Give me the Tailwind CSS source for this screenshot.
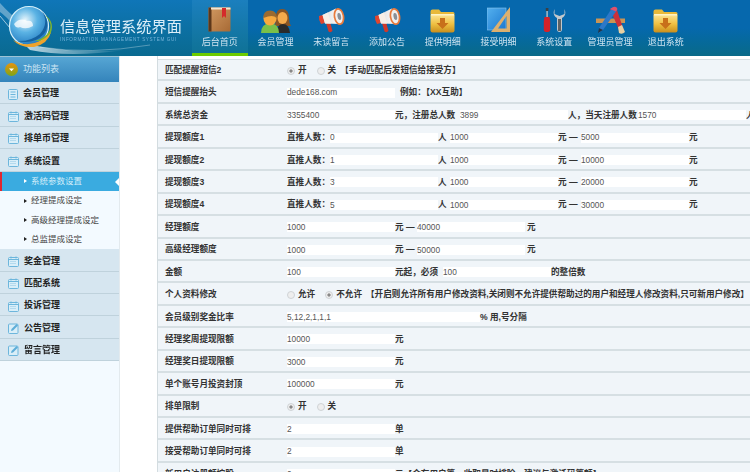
<!DOCTYPE html>
<html lang="en">
<head>
  <meta charset="UTF-8">
  <title>信息管理系统界面</title>
  <script src="https://cdn.jsdelivr.net/npm/@tailwindcss/browser@4"></script>
</head>
<body class="bg-white">
<div class="w-[750px] h-[472px] overflow-hidden flex flex-col font-['Liberation_Sans','Noto_Sans_CJK_SC',sans-serif] blur-[0.3px]">

  <!-- shared icon parts -->
  <svg class="absolute w-0 h-0">
    <defs>
      <linearGradient id="folderFill" x1="0" y1="0" x2="0" y2="1"><stop offset="0" stop-color="#fbe08a"/><stop offset="0.5" stop-color="#efc042"/><stop offset="1" stop-color="#c98e1c"/></linearGradient>
      <linearGradient id="hornFill" x1="0" y1="0" x2="1" y2="0"><stop offset="0" stop-color="#d9d9d9"/><stop offset="1" stop-color="#ffffff"/></linearGradient>
      <symbol id="folder" viewBox="0 0 25 25">
        <path d="M0.5 3.5 Q0.5 1.5 2.5 1.5 H9 L11 4 H23 Q24.5 4 24.5 5.5 V8 H0.5Z" fill="#e8b93a"/>
        <rect x="1" y="6" width="23" height="2" fill="#fff3c4"/>
        <path d="M0.5 7.5 H24.5 V22.5 Q24.5 24.5 22.5 24.5 H2.5 Q0.5 24.5 0.5 22.5Z" fill="url(#folderFill)"/>
        <path d="M10 10 H15 V15 H18.5 L12.5 21 L6.5 15 H10Z" fill="#c8701a"/>
      </symbol>
      <symbol id="horn" viewBox="0 0 27 26">
        <path d="M8 16 L12 15 L14.5 24 Q12.5 26 10.5 24.5Z" fill="#d0392b"/>
        <path d="M1 9 L5 8 L7 16 L3 17 Q0.5 13 1 9Z" fill="#e0452f"/>
        <path d="M4.5 8 L18 1.5 L22 17 L7 16.5Z" fill="url(#hornFill)"/>
        <path d="M4.5 8 L7 16.5 L13 16.4 L10 5.5Z" fill="#f7efe6"/>
        <ellipse cx="21" cy="9.5" rx="5.3" ry="8.7" fill="#e87a3c" transform="rotate(-10 21 9.5)"/>
        <ellipse cx="21" cy="9.5" rx="3.6" ry="6.8" fill="#f0f0f0" transform="rotate(-10 21 9.5)"/>
        <ellipse cx="21.3" cy="9.5" rx="1.8" ry="3.6" fill="#8a8f96" transform="rotate(-10 21 9.5)"/>
      </symbol>
      <symbol id="calendar" viewBox="0 0 11 11">
        <rect x="0.5" y="1.5" width="10" height="9" rx="1" fill="#d9eef8" stroke="#6db6dc"/>
        <path d="M0.5 3.5H10.5" stroke="#6db6dc"/>
        <path d="M3 0.5V2.5M8 0.5V2.5" stroke="#6db6dc"/>
        <path d="M2.5 5.5H8.5M2.5 7.5H8.5" stroke="#8cc5e3" stroke-dasharray="1 1"/>
      </symbol>
      <symbol id="note" viewBox="0 0 11 11">
        <rect x="0.5" y="1" width="9.5" height="9.5" rx="1" fill="#d9eef8" stroke="#6db6dc"/>
        <path d="M3 8 L3.5 6 L8.5 1 L10 2.5 L5 7.5Z" fill="#5eaed8"/>
      </symbol>
    </defs>
  </svg>

  <header class="h-[56px] shrink-0 flex bg-gradient-to-b from-[#0668ad] from-50% to-[#0a6a88]">
    <div class="relative w-[192px] shrink-0 overflow-hidden bg-gradient-to-b from-[#0f76b8] to-[#0a6a90]">
      <svg class="absolute inset-0" width="192" height="56" viewBox="0 0 192 56">
        <defs>
          <radialGradient id="globe" cx="0.4" cy="0.35" r="0.7"><stop offset="0" stop-color="#e8f6fc"/><stop offset="0.45" stop-color="#5bb3e4"/><stop offset="1" stop-color="#1d75bd"/></radialGradient>
          <linearGradient id="shine" x1="0" y1="0" x2="1" y2="0"><stop offset="0" stop-color="#ffffff" stop-opacity="0.75"/><stop offset="1" stop-color="#ffffff" stop-opacity="0"/></linearGradient>
        </defs>
        <path d="M0 3 Q8 12 20 22 L14 26 Q6 16 0 12Z" fill="#ffffff" opacity="0.35"/>
        <path d="M0 16 Q5 22 10 28" stroke="#ffffff" stroke-opacity="0.6" fill="none"/>
        <path d="M22 42 Q60 54 125 50 Q70 58 30 50Z" fill="url(#shine)"/>
        <path d="M40 47 Q90 55 150 45" stroke="#ffffff" stroke-opacity="0.3" fill="none"/>
        <circle cx="29" cy="26" r="19.5" fill="url(#globe)" stroke="#d6f0fa" stroke-width="1.2"/>
        <path d="M14 24 Q20 17 27 21 Q33 20 33 26 Q26 30 20 27 Q16 29 14 24Z" fill="#ffffff" opacity="0.75"/>
        <path d="M41 10 Q50 22 40 34 Q30 42 17 41 Q34 45 44 34 Q52 22 41 10Z" fill="#15619f"/>
        <path d="M45 15 Q56 27 45 36 Q40 40 35 41 Q51 42 52 27 Q52 20 45 15Z" fill="#7fb52e"/>
        <path d="M13 40 Q26 48 40 41 Q48 37 51 32 Q48 44 34 47 Q20 48 13 40Z" fill="#efa32b"/>
      </svg>
      <div class="absolute left-[60px] top-[18px] text-[15.25px] leading-[17px] text-[#dbeef8] whitespace-nowrap">信息管理系统界面</div>
      <div class="absolute left-[60px] top-[37px] text-[4.6px] leading-[6px] tracking-[0.65px] text-[#74b3d8] whitespace-nowrap">INFORMATION MANAGEMENT SYSTEM GUI</div>
    </div>

    <nav class="flex text-[9px] text-[#cfe4f0] [&>a]:w-[55.75px] [&>a]:h-[56px] [&>a]:shrink-0 [&>a]:relative [&>a]:flex [&>a]:justify-center [&>a>span]:absolute [&>a>span]:top-[36px] [&>a>span]:leading-[12px] [&>a>span]:whitespace-nowrap">
      <a class="border-b-[3px] border-[#6ccb00] bg-gradient-to-b from-[#1b7fbe] to-[#0f7296]">
        <svg class="mt-[7px]" width="23" height="25" viewBox="0 0 23 25">
          <defs><linearGradient id="cover" x1="0" y1="0" x2="1" y2="1"><stop offset="0" stop-color="#d29a62"/><stop offset="1" stop-color="#a76a35"/></linearGradient></defs>
          <rect x="0.5" y="0.5" width="22" height="24" rx="1" fill="url(#cover)"/>
          <rect x="0.5" y="0.5" width="3" height="24" fill="#5c371a"/>
          <rect x="3" y="0.5" width="19.5" height="2" fill="#f3e6d0"/>
          <path d="M14 1 H18 V11 L16 9 L14 11Z" fill="#d42a2a"/>
        </svg>
        <span>后台首页</span>
      </a>
      <a>
        <svg class="mt-[9px]" width="30" height="24" viewBox="0 0 30 24">
          <path d="M15 8 Q15 0 21 0 Q28 0 28 9 Q28 14 30 17 L14 17Z" fill="#8a5524"/>
          <path d="M16 24 Q16 15 22 15 Q28 15 29 24Z" fill="#2a2a2a"/>
          <ellipse cx="21.5" cy="9" rx="5" ry="6" fill="#f4aa4c"/>
          <path d="M0 24 Q0 15 9 14 Q18 15 18 24Z" fill="#7ac04a"/>
          <ellipse cx="9" cy="9.5" rx="6.5" ry="7" fill="#f7a93e"/>
          <path d="M2.5 9 Q2 1.5 9 1.5 Q16 1.5 15.5 9 Q12 5 2.5 9Z" fill="#9a6a30"/>
        </svg>
        <span>会员管理</span>
      </a>
      <a><svg class="mt-[7px]" width="27" height="26"><use href="#horn"/></svg><span>未读留言</span></a>
      <a><svg class="mt-[7px]" width="27" height="26"><use href="#horn"/></svg><span>添加公告</span></a>
      <a><svg class="mt-[8px]" width="25" height="25"><use href="#folder"/></svg><span>提供明细</span></a>
      <a>
        <svg class="mt-[7px]" width="23" height="26" viewBox="0 0 23 26">
          <defs><linearGradient id="sheet" x1="0" y1="0" x2="1" y2="1"><stop offset="0" stop-color="#54b0ee"/><stop offset="1" stop-color="#1b78d0"/></linearGradient></defs>
          <rect x="0" y="1" width="19" height="22" fill="url(#sheet)" stroke="#8ccaf2" stroke-width="0.6"/>
          <path d="M23 0 V25 H4Z M19.5 9 L11 21.5 H19.5Z" fill="#dcb070" fill-rule="evenodd"/>
        </svg>
        <span>接受明细</span>
      </a>
      <a>
        <svg class="mt-[8px]" width="23" height="24" viewBox="0 0 23 24">
          <rect x="3.4" y="0" width="1.4" height="9" fill="#b9bdc2"/>
          <rect x="2.8" y="0" width="2.6" height="3" fill="#3b3f44"/>
          <path d="M1.5 9 H6.5 L7.2 13 V22 Q7 24 4 24 Q1 24 0.8 22 V13Z" fill="#d3222a"/>
          <path d="M11.5 1 Q9 7 14 10 V21 Q14 24 16.5 24 Q19 24 19 21 V10 Q24 7 21.5 1 V6 L16.5 8 L11.5 6Z" fill="#c3c8cc"/>
          <rect x="15" y="11" width="3" height="12" fill="#5d6266"/>
        </svg>
        <span>系统设置</span>
      </a>
      <a>
        <svg class="mt-[6px]" width="29" height="28" viewBox="0 0 29 28">
          <path d="M0 12.5 H29 V17 H0Z" fill="#c99455"/>
          <path d="M14 3 L21 4 L28 25 L24 26Z" fill="#cc3038"/>
          <path d="M22 21 L26 19 L29 26 Q26 29 23 27Z" fill="#e8d0a2"/>
          <path d="M16 2 Q20 0 21 4 L7 24 L3 27 L3 22Z" fill="#2c78c8"/>
          <path d="M15.5 2 Q20 -1 21.5 3 L20 5.5 L14 3Z" fill="#e0506a"/>
          <path d="M3 22 L7 24 L2 27Z" fill="#23364a"/>
        </svg>
        <span>管理员管理</span>
      </a>
      <a><svg class="mt-[8px]" width="25" height="25"><use href="#folder"/></svg><span>退出系统</span></a>
    </nav>
  </header>

  <div class="flex-1 flex min-h-0">
    <aside class="w-[120px] shrink-0 bg-[#f3faff] text-[9px] text-[#222] font-bold border-r border-[#e3eaee] [&>a]:h-[22.4px] [&>a]:flex [&>a]:items-center [&>a]:gap-[5px] [&>a]:pl-[8px] [&>a]:pt-[3px] [&>a]:bg-[#d6e6f0] [&>a]:border-b [&>a]:border-[#bfd2dc] [&_svg]:shrink-0">
      <div class="h-[26px] flex items-center gap-[5px] pl-[5px] bg-gradient-to-b from-[#56a6d4] to-[#3484bb] text-[#cce5f3] font-normal border-t border-[#9cc3d6]">
        <svg width="13" height="13" viewBox="0 0 13 13">
          <defs><linearGradient id="dot" x1="0" y1="0" x2="0" y2="1"><stop offset="0" stop-color="#e8930f"/><stop offset="1" stop-color="#7fa516"/></linearGradient></defs>
          <circle cx="6.5" cy="6.5" r="6.5" fill="url(#dot)"/>
          <path d="M4 5.5 H9 L6.5 8.2Z" fill="#ffffff"/>
        </svg>
        <span>功能列表</span>
      </div>
      <a>
        <svg width="10" height="11" viewBox="0 0 10 11"><rect x="0.5" y="0.5" width="9" height="10" rx="1" fill="#d9eef8" stroke="#6db6dc"/><path d="M2.5 3H7.5M2.5 5.5H7.5M2.5 8H7.5" stroke="#6db6dc"/></svg>
        <span>会员管理</span>
      </a>
      <a><svg width="11" height="11"><use href="#calendar"/></svg><span>激活码管理</span></a>
      <a><svg width="11" height="11"><use href="#calendar"/></svg><span>排单币管理</span></a>
      <a><svg width="11" height="11"><use href="#calendar"/></svg><span>系统设置</span></a>
      <ul class="text-[8.5px] text-[#444] font-normal [&>li]:h-[19.4px] [&>li]:flex [&>li]:items-center [&>li]:gap-[4px] [&>li]:pl-[24px]">
        <li class="relative border-l-2 border-[#e0262f] !pl-[22px] bg-[#3aabe0] text-[#d5eefa]">
          <i class="w-0 h-0 border-y-[2.5px] border-y-transparent border-l-[3px] border-l-white"></i>系统参数设置
          <i class="absolute right-0 top-[6px] w-0 h-0 border-y-[4px] border-y-transparent border-r-[4px] border-r-white"></i>
        </li>
        <li><i class="w-0 h-0 border-y-[2.5px] border-y-transparent border-l-[3px] border-l-[#222]"></i>经理提成设定</li>
        <li><i class="w-0 h-0 border-y-[2.5px] border-y-transparent border-l-[3px] border-l-[#222]"></i>高级经理提成设定</li>
        <li><i class="w-0 h-0 border-y-[2.5px] border-y-transparent border-l-[3px] border-l-[#222]"></i>总监提成设定</li>
      </ul>
      <a><svg width="11" height="11"><use href="#calendar"/></svg><span>奖金管理</span></a>
      <a><svg width="11" height="11"><use href="#calendar"/></svg><span>匹配系统</span></a>
      <a><svg width="11" height="11"><use href="#calendar"/></svg><span>投诉管理</span></a>
      <a><svg width="11" height="11"><use href="#note"/></svg><span>公告管理</span></a>
      <a><svg width="11" height="11"><use href="#note"/></svg><span>留言管理</span></a>
    </aside>

    <main class="ml-[37px] flex-1 min-w-0 overflow-hidden border-l border-[#d3dce0] pt-[3px] text-[8.6px] text-[#333] whitespace-nowrap [&>div]:h-[22.45px] [&>div]:flex [&>div]:items-center [&>div]:bg-[#f0f5f9] [&>div]:border-b-2 [&>div]:border-[#d6dfe3] [&>div]:pl-[7px] [&>div]:pt-[2px] [&_label]:w-[122px] [&_label]:shrink-0 [&_label]:font-bold [&_input[type=text]]:h-[10px] [&_input[type=text]]:w-[108px] [&_input[type=text]]:shrink-0 [&_input[type=text]]:bg-white [&_input[type=text]]:text-[8.3px] [&_input[type=text]]:text-[#555] [&_b]:font-bold [&_b]:whitespace-pre [&_b]:shrink-0">
      <div class="border-t border-[#d6dfe3]">
        <label>匹配提醒短信2</label>
        <i class="w-2 h-2 rounded-full border border-[#cfd3d6] bg-[radial-gradient(circle,#888_35%,#eee_40%)] mr-[3px]"></i><b>开</b>
        <i class="w-2 h-2 rounded-full border border-[#cfd3d6] bg-[#eee] ml-[10px] mr-[3px]"></i><b>关</b>
        <b class="ml-[4px]">【手动匹配后发短信给接受方】</b>
      </div>
      <div><label>短信提醒抬头</label><input type="text" value="dede168.com"><b class="ml-[5px]">例如：【XX互助】</b></div>
      <div><label>系统总资金</label><input type="text" value="3355400"><b class="w-[65px]">元，注册总人数</b><input type="text" value="3899"><b class="w-[70px]">人，当天注册人数</b><input type="text" value="1570"><b>人</b></div>
      <div><label>提现额度1</label><b class="w-[43px]">直推人数：</b><input type="text" value="0"><b class="w-[12px]">人</b><input type="text" value="1000"><b class="w-[23px]">元 —</b><input type="text" value="5000"><b>元</b></div>
      <div><label>提现额度2</label><b class="w-[43px]">直推人数：</b><input type="text" value="1"><b class="w-[12px]">人</b><input type="text" value="1000"><b class="w-[23px]">元 —</b><input type="text" value="10000"><b>元</b></div>
      <div><label>提现额度3</label><b class="w-[43px]">直推人数：</b><input type="text" value="3"><b class="w-[12px]">人</b><input type="text" value="1000"><b class="w-[23px]">元 —</b><input type="text" value="20000"><b>元</b></div>
      <div><label>提现额度4</label><b class="w-[43px]">直推人数：</b><input type="text" value="5"><b class="w-[12px]">人</b><input type="text" value="1000"><b class="w-[23px]">元 —</b><input type="text" value="30000"><b>元</b></div>
      <div><label>经理额度</label><input type="text" value="1000"><b class="w-[22px]">元 —</b><input type="text" value="40000"><b class="ml-[2px]">元</b></div>
      <div><label>高级经理额度</label><input type="text" value="1000"><b class="w-[22px]">元 —</b><input type="text" value="50000"><b class="ml-[2px]">元</b></div>
      <div><label>金额</label><input type="text" value="100"><b class="w-[48px]">元起，必须</b><input type="text" value="100"><b>的整倍数</b></div>
      <div>
        <label>个人资料修改</label>
        <i class="w-2 h-2 rounded-full border border-[#cfd3d6] bg-[#eee] mr-[3px]"></i><b>允许</b>
        <i class="w-2 h-2 rounded-full border border-[#cfd3d6] bg-[radial-gradient(circle,#888_35%,#eee_40%)] ml-[10px] mr-[3px]"></i><b>不允许</b>
        <b class="ml-[4px]">【开启则允许所有用户修改资料,关闭则不允许提供帮助过的用户和经理人修改资料,只可新用户修改】</b>
      </div>
      <div><label>会员级别奖金比率</label><input type="text" value="5,12,2,1,1,1" class="!w-[193px]"><b>% 用,号分隔</b></div>
      <div><label>经理奖周提现限额</label><input type="text" value="10000"><b>元</b></div>
      <div><label>经理奖日提现限额</label><input type="text" value="3000"><b>元</b></div>
      <div><label>单个账号月投资封顶</label><input type="text" value="100000"><b>元</b></div>
      <div>
        <label>排单限制</label>
        <i class="w-2 h-2 rounded-full border border-[#cfd3d6] bg-[radial-gradient(circle,#888_35%,#eee_40%)] mr-[3px]"></i><b>开</b>
        <i class="w-2 h-2 rounded-full border border-[#cfd3d6] bg-[#eee] ml-[10px] mr-[3px]"></i><b>关</b>
      </div>
      <div><label>提供帮助订单同时可排</label><input type="text" value="2"><b>单</b></div>
      <div><label>接受帮助订单同时可排</label><input type="text" value="2"><b>单</b></div>
      <div><label>新用户注册额控股</label><input type="text" value="0"><b>元【会有用户等，收取是时排除，建议与激活码等额】</b></div>
    </main>
  </div>
</div>
</body>
</html>
